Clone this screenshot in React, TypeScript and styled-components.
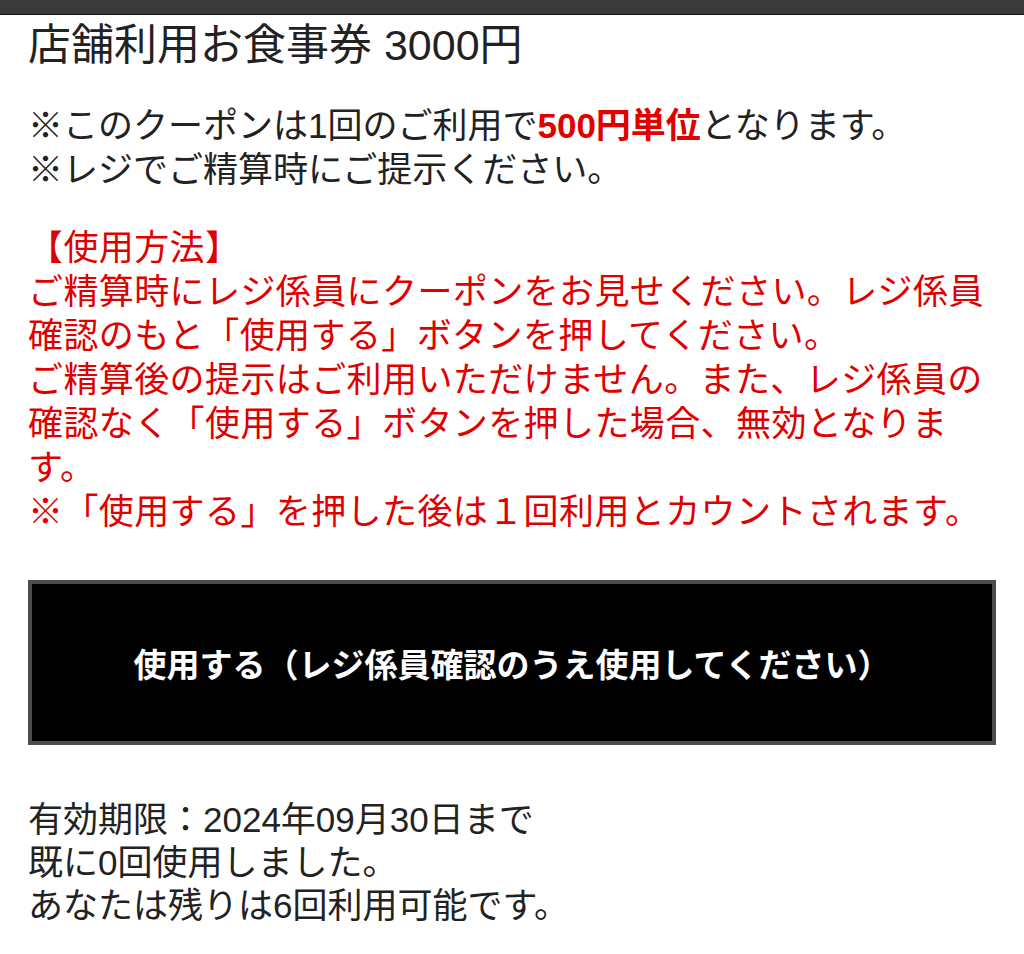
import React from "react";
import styled, { createGlobalStyle } from "styled-components";

const GlobalStyle = createGlobalStyle`
  html, body {
    margin: 0;
    padding: 0;
    background: #ffffff;
  }
  body {
    font-family: "Liberation Sans", "Noto Sans CJK JP", sans-serif;
    color: #222222;
  }
`;

const Page = styled.div`
  width: 1024px;
  min-height: 954px;
  background: #ffffff;
  display: flex;
  flex-direction: column;
`;

const TopBar = styled.div`
  height: 14px;
  background: #3a3a3a;
  border-bottom: 1px solid #151515;
`;

const Content = styled.main`
  display: flex;
  flex-direction: column;
  padding: 4px 28px 0;
`;

const Title = styled.h1`
  margin: 0;
  font-size: 43px;
  font-weight: 400;
  line-height: 52px;
  color: #222222;
  white-space: nowrap;
`;

const Notes = styled.p`
  margin: 33px 0 0;
  font-size: 35px;
  line-height: 44px;
  color: #222222;
  white-space: nowrap;
`;

const Strong = styled.strong`
  color: #e00000;
  font-weight: 700;
`;

const Usage = styled.p`
  margin: 31px 0 0;
  font-family: "Noto Sans CJK JP", sans-serif;
  font-size: 35px;
  line-height: 44px;
  letter-spacing: 0.4px;
  color: #e00000;
  white-space: nowrap;
`;

const UseButton = styled.button`
  margin-top: 49px;
  width: 100%;
  height: 165px;
  background: #000000;
  border: 4px solid #4d4d4d;
  color: #ffffff;
  font-family: "Noto Sans CJK JP", sans-serif;
  font-size: 33px;
  font-weight: 700;
  display: flex;
  align-items: center;
  justify-content: center;
  cursor: pointer;
  padding: 0;
`;

const Status = styled.p`
  margin: 53px 0 0;
  font-size: 35px;
  line-height: 43px;
  color: #222222;
  white-space: nowrap;
`;

export default function App() {
  return (
    <>
      <GlobalStyle />
      <Page>
        <TopBar />
        <Content>
          <Title>店舗利用お食事券 3000円</Title>
          <Notes>
            ※このクーポンは1回のご利用で<Strong>500円単位</Strong>となります。
            <br />
            ※レジでご精算時にご提示ください。
          </Notes>
          <Usage>
            【使用方法】
            <br />
            ご精算時にレジ係員にクーポンをお見せください。レジ係員
            <br />
            確認のもと「使用する」ボタンを押してください。
            <br />
            ご精算後の提示はご利用いただけません。また、レジ係員の
            <br />
            確認なく「使用する」ボタンを押した場合、無効となりま
            <br />
            す。
            <br />
            ※「使用する」を押した後は１回利用とカウントされます。
          </Usage>
          <UseButton type="button">使用する（レジ係員確認のうえ使用してください）</UseButton>
          <Status>
            有効期限：2024年09月30日まで
            <br />
            既に0回使用しました。
            <br />
            あなたは残りは6回利用可能です。
          </Status>
        </Content>
      </Page>
    </>
  );
}
